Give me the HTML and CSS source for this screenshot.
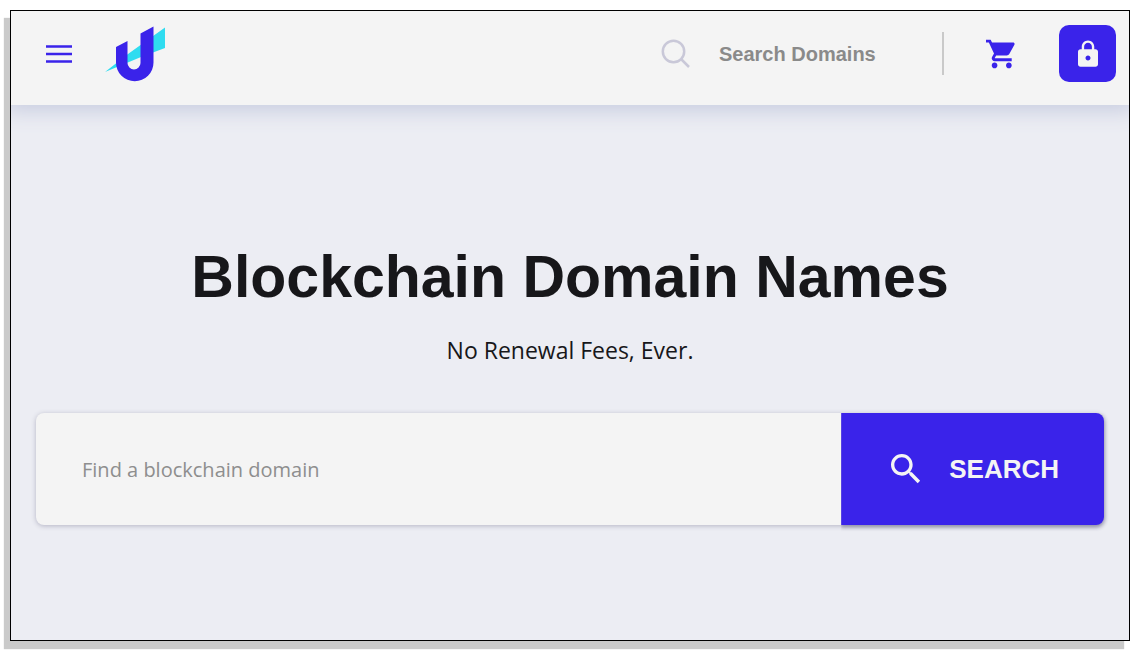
FILE: index.html
```html
<!DOCTYPE html>
<html lang="en">
<head>
<meta charset="utf-8">
<meta name="viewport" content="width=device-width, initial-scale=1">
<title>Blockchain Domain Names</title>
<link rel="stylesheet" href="styles.css">
</head>
<body>
<div class="frame">
  <header class="topbar">
    <button class="icon-button" type="button" aria-label="Menu">
      <svg class="menu-icon" viewBox="0 0 26 18" aria-hidden="true"><path d="M0 1.500h26M0 9h26M0 16.500h26"/></svg>
    </button>
    <a class="logo" href="#" aria-label="Home">
      <svg viewBox="0 0 62 58" aria-hidden="true">
        <path fill="#2fdcf0" d="M0 47 L23 29 L60 2.500 V23 L36 32 Z"/>
        <path fill="#3a23ea" d="M11 22 L22.500 16 V38 a6.500 6.500 0 0 0 13 0 V8.500 L48.500 1.500 V37.500 a18.750 18.750 0 0 1 -37.500 0 Z"/>
      </svg>
    </a>
    <label class="quick-search">
      <svg class="quick-icon" viewBox="0 0 30 30" aria-hidden="true"><circle cx="12.500" cy="12.500" r="10.700"/><path d="M20 20l8 8"/></svg>
      <input class="quick-input" type="text" placeholder="Search Domains" aria-label="Search Domains">
    </label>
    <span class="divider"></span>
    <button class="icon-button" type="button" aria-label="Cart">
      <svg class="cart-icon" viewBox="1 2 21 20" aria-hidden="true"><path d="M7 18c-1.100 0-1.990.9-1.990 2S5.900 22 7 22s2-.9 2-2-.9-2-2-2zM1 2v2h2l3.600 7.590-1.350 2.450c-.16.28-.25.61-.25.960 0 1.100.9 2 2 2h12v-2H7.420c-.14 0-.25-.11-.25-.25l.03-.12.9-1.630h7.450c.75 0 1.410-.41 1.750-1.030l3.580-6.490c.08-.14.12-.31.12-.48 0-.55-.45-1-1-1H5.210l-.94-2H1zm16 16c-1.100 0-1.990.9-1.990 2s.89 2 1.990 2 2-.9 2-2-.9-2-2-2z"/></svg>
    </button>
    <button class="lock-button" type="button" aria-label="Sign in">
      <svg class="lock-icon" viewBox="4 1 16 21" aria-hidden="true"><path d="M18 8h-1V6c0-2.760-2.240-5-5-5S7 3.240 7 6v2H6c-1.100 0-2 .9-2 2v10c0 1.100.9 2 2 2h12c1.100 0 2-.9 2-2V10c0-1.100-.9-2-2-2zm-6 9c-1.100 0-2-.9-2-2s.9-2 2-2 2 .9 2 2-.9 2-2 2zm3.100-9H8.900V6c0-1.710 1.390-3.100 3.100-3.100 1.710 0 3.100 1.390 3.100 3.100v2z"/></svg>
    </button>
  </header>
  <main class="hero">
    <h1 class="title">Blockchain Domain Names</h1>
    <p class="subtitle">No Renewal Fees, Ever.</p>
    <form class="search">
      <input class="search-input" type="text" placeholder="Find a blockchain domain" aria-label="Find a blockchain domain">
      <button class="search-button" type="button">
        <svg class="search-icon" viewBox="3 3 18 18" aria-hidden="true"><path d="M15.500 14h-.79l-.28-.27C15.410 12.590 16 11.110 16 9.500 16 5.910 13.090 3 9.500 3S3 5.910 3 9.500 5.910 16 9.500 16c1.610 0 3.090-.59 4.230-1.570l.27.28v.79l5 4.990L20.490 19l-4.990-5zm-6 0C7.010 14 5 11.990 5 9.500S7.010 5 9.500 5 14 7.010 14 9.500 11.990 14 9.500 14z"/></svg>
        SEARCH
      </button>
    </form>
  </main>
</div>
</body>
</html>
```
FILE: styles.css
```css
* {
  box-sizing: border-box;
}

body {
  margin: 0;
  padding: 10px;
  background: #fff;
  color: #17171a;
  font-family: "Open Sans", "Noto Sans", sans-serif;
}

button,
input {
  margin: 0;
  padding: 0;
  border: 0;
  background: none;
  font: inherit;
}

svg {
  display: block;
}

.frame {
  display: flex;
  flex-direction: column;
  min-height: calc(100vh - 20px);
  border: 1px solid #000;
  background: #ecedf3;
  box-shadow: -6px 8px 1px #cacaca;
}

.topbar {
  display: flex;
  align-items: center;
  height: 94px;
  padding: 0 13px 9px 35px;
  background: #f4f4f4;
  box-shadow: 0 0 20px 6px #c8cde0;
  clip-path: inset(0 0 -30px 0);
}

.menu-icon {
  width: 26px;
  height: 18px;
  stroke: #3a23ea;
  stroke-width: 2.4;
}

.logo {
  margin-left: 33px;
}

.logo svg {
  width: 62px;
  height: 58px;
}

.quick-search {
  display: flex;
  align-items: center;
  gap: 28px;
  margin-left: auto;
}

.quick-icon {
  width: 30px;
  height: 30px;
  fill: none;
  stroke: #c9c8d8;
  stroke-width: 2.5;
}

.quick-input {
  width: 200px;
  color: #17171a;
  font: bold 20px/28px "Liberation Sans", Arial, sans-serif;
}

.quick-input::placeholder {
  color: #8a8a8a;
  opacity: 1;
}

.divider {
  width: 2px;
  height: 43px;
  margin: 0 42px 0 23px;
  background: #c9c9c9;
}

.cart-icon {
  width: 30px;
  height: 30px;
  fill: #3a23ea;
}

.lock-button {
  display: grid;
  place-items: center;
  width: 57px;
  height: 57px;
  margin-left: 43px;
  border-radius: 10px;
  background: #3a23ea;
}

.lock-icon {
  width: 20px;
  height: 27px;
  fill: #f4f4f4;
}

.hero {
  padding: 136px 25px 48px;
  text-align: center;
}

.title {
  margin: 0;
  font: bold 59px/72px "Liberation Sans", Arial, sans-serif;
}

.subtitle {
  margin: 21px 0 47px;
  font-size: 23px;
  line-height: 32px;
}

.search {
  display: flex;
  height: 112px;
  border-radius: 8px;
  background: #f4f4f4;
  box-shadow: 0 1px 5px #b4b4c4;
}

.search-input {
  flex: 1;
  min-width: 0;
  padding: 0 46px;
  color: #17171a;
  font-size: 20px;
}

.search-input::placeholder {
  color: #8e8e8e;
  opacity: 1;
}

.search-button {
  display: flex;
  align-items: center;
  gap: 28px;
  padding: 0 45px 0 50px;
  border-radius: 0 8px 8px 0;
  background: #3a23ea;
  box-shadow: 0 2px 4px #8f8fa6;
  color: #f4f4f4;
  font: bold 26px/32px "Liberation Sans", Arial, sans-serif;
  clip-path: inset(0 -8px -8px 0);
}

.search-icon {
  width: 30px;
  height: 30px;
  fill: #f4f4f4;
}
```
